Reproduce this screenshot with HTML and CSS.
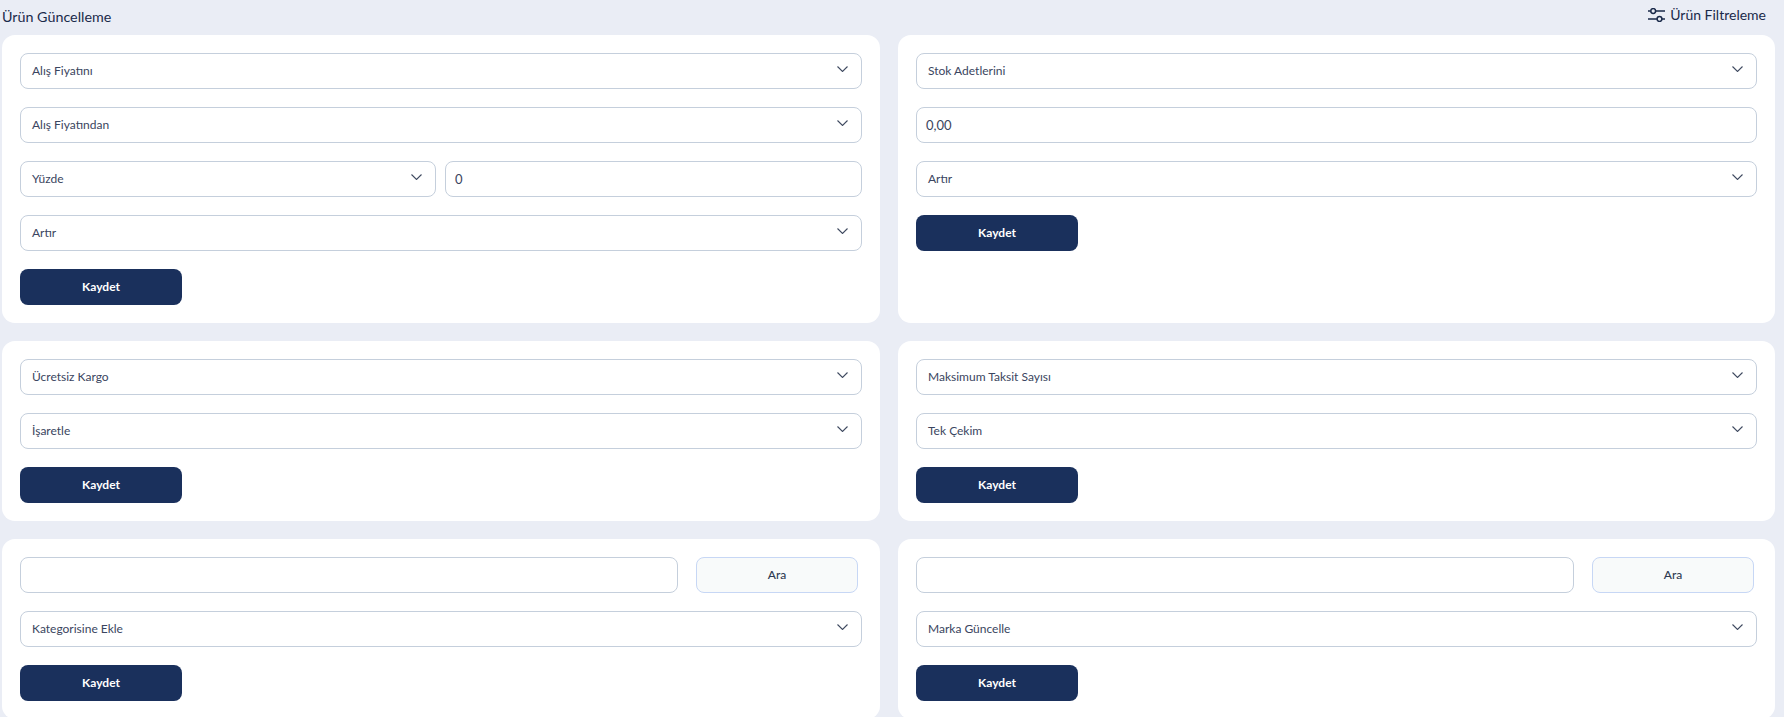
FILE: index.html
```html
<!DOCTYPE html>
<html lang="tr">
<head>
<meta charset="utf-8">
<title>Ürün Güncelleme</title>
<link rel="stylesheet" href="styles.css">
</head>
<body>
<svg class="sprite" width="0" height="0" aria-hidden="true">
  <symbol id="chev" viewBox="0 0 11 6"><path d="M0.5 0.5l5 5 5-5" fill="none" stroke="currentColor" stroke-width="1.1"/></symbol>
</svg>
<div class="page">
  <header class="top">
    <h1 class="title">Ürün Güncelleme</h1>
    <div class="filter">
      <svg class="filter-icon" viewBox="0 0 17 14" width="17" height="14" fill="none" stroke="currentColor" stroke-width="1.5">
        <path d="M0 3H2.8M7.6 3H17M0 11H9.1M13.9 11H17"/>
        <circle cx="5.2" cy="3" r="2.4"/>
        <circle cx="11.5" cy="11" r="2.4"/>
      </svg>
      <span>Ürün Filtreleme</span>
    </div>
  </header>
  <main class="grid">
    <section class="card">
      <div class="select"><span>Alış Fiyatını</span><svg class="chev"><use href="#chev"/></svg></div>
      <div class="select"><span>Alış Fiyatından</span><svg class="chev"><use href="#chev"/></svg></div>
      <div class="row">
        <div class="select"><span>Yüzde</span><svg class="chev"><use href="#chev"/></svg></div>
        <div class="input num">0</div>
      </div>
      <div class="select"><span>Artır</span><svg class="chev"><use href="#chev"/></svg></div>
      <button class="save">Kaydet</button>
    </section>
    <section class="card">
      <div class="select"><span>Stok Adetlerini</span><svg class="chev"><use href="#chev"/></svg></div>
      <div class="input num">0,00</div>
      <div class="select"><span>Artır</span><svg class="chev"><use href="#chev"/></svg></div>
      <button class="save">Kaydet</button>
    </section>
    <section class="card">
      <div class="select"><span>Ücretsiz Kargo</span><svg class="chev"><use href="#chev"/></svg></div>
      <div class="select"><span>İşaretle</span><svg class="chev"><use href="#chev"/></svg></div>
      <button class="save">Kaydet</button>
    </section>
    <section class="card">
      <div class="select"><span>Maksimum Taksit Sayısı</span><svg class="chev"><use href="#chev"/></svg></div>
      <div class="select"><span>Tek Çekim</span><svg class="chev"><use href="#chev"/></svg></div>
      <button class="save">Kaydet</button>
    </section>
    <section class="card">
      <div class="search">
        <div class="input"></div>
        <button class="find">Ara</button>
      </div>
      <div class="select"><span>Kategorisine Ekle</span><svg class="chev"><use href="#chev"/></svg></div>
      <button class="save">Kaydet</button>
    </section>
    <section class="card">
      <div class="search">
        <div class="input"></div>
        <button class="find">Ara</button>
      </div>
      <div class="select"><span>Marka Güncelle</span><svg class="chev"><use href="#chev"/></svg></div>
      <button class="save">Kaydet</button>
    </section>
  </main>
</div>
</body>
</html>
```
FILE: styles.css
```css
* { box-sizing: border-box; }
html, body { margin: 0; height: 100%; overflow: hidden; }
body {
  background: #eaedf5;
  font-family: "Lato", "Liberation Sans", sans-serif;
  color: #3a4560;
}
.sprite { position: absolute; }
.page { padding: 0 9px 0 2px; }
.top {
  height: 35px;
  display: flex;
  justify-content: space-between;
  align-items: flex-start;
}
.title {
  margin: 8px 0 0;
  font-size: 14.3px;
  line-height: 17px;
  font-weight: 400;
  color: #1a2a4a;
}
.filter {
  display: flex;
  align-items: center;
  gap: 5px;
  margin: 6px 9px 0 0;
  font-size: 14px;
  line-height: 17px;
  color: #1a2a4a;
}
.filter-icon { display: block; }
.grid {
  display: grid;
  grid-template-columns: 878px 877px;
  gap: 18px;
}
.card {
  background: #fff;
  border-radius: 13px;
  padding: 18px;
  display: flex;
  flex-direction: column;
  gap: 18px;
  align-items: stretch;
}
.select, .input {
  height: 36px;
  border: 1px solid #c5cfdc;
  border-radius: 8px;
  background: #fff;
  font-size: 12px;
  display: flex;
  align-items: center;
  padding: 0 11px;
  color: #3a4560;
}
.select { justify-content: space-between; padding-bottom: 2px; }
.chev { width: 11px; height: 6px; margin: 0 2.5px 2px 0; color: #3f4a60; flex: none; }
.input.num { font-size: 13px; padding: 0 9px; }
.row { display: grid; grid-template-columns: 416px 417px; gap: 9px; }
.search { display: grid; grid-template-columns: 658px 162px; gap: 18px; }
.find {
  height: 36px;
  border: 1px solid #c7d7f5;
  border-radius: 8px;
  background: #f8fafa;
  color: #2f3a52;
  font: 500 12px "Lato", "Liberation Sans", sans-serif;
  padding: 0 0 1px;
}
.save {
  width: 162px;
  height: 36px;
  border: 0;
  border-radius: 8px;
  background: #1a305c;
  color: #fff;
  font: 700 12px "Lato", "Liberation Sans", sans-serif;
  padding: 0 0 2px;
}
```
